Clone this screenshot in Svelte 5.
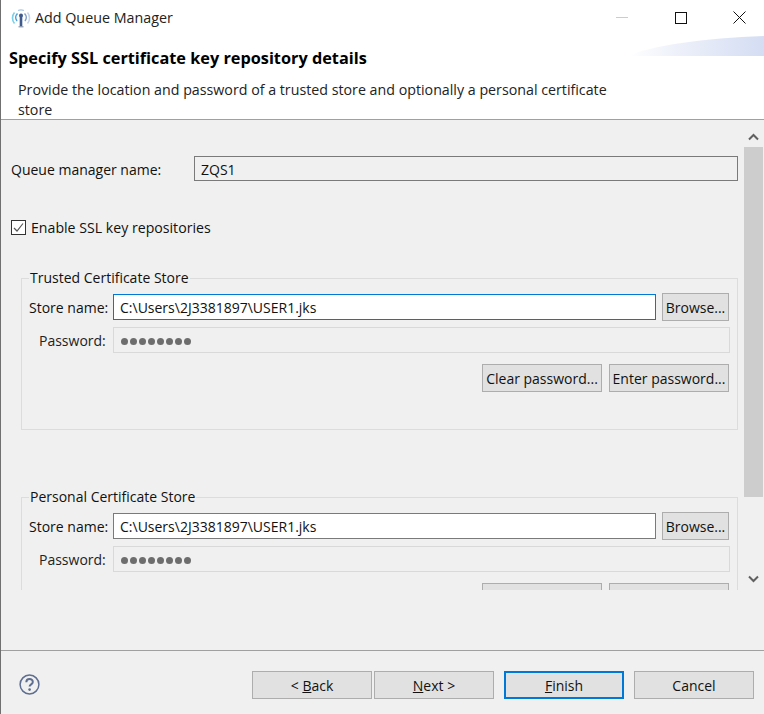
<script>
  const groups = [
    { title: 'Trusted Certificate Store', focused: true },
    { title: 'Personal Certificate Store', focused: false }
  ];
  const storePath = 'C:\\Users\\2J3381897\\USER1.jks';
</script>

<div class="window">
  <div class="titlebar">
    <svg class="app-icon" width="20" height="20" viewBox="0 0 20 20" fill="none">
      <path d="M3.500 15.500a8.500 8.500 0 0 1 0-11" stroke="#79d0e8" stroke-width="1.600" />
      <path d="M6 13a5.500 5.500 0 0 1 .5-7.500" stroke="#4f9fd8" stroke-width="1.600" />
      <path d="M16.500 15.500a8.500 8.500 0 0 0 0-11" stroke="#c5d5ea" stroke-width="1.600" />
      <path d="M14 13a5.500 5.500 0 0 0-.5-7.500" stroke="#7f9fca" stroke-width="1.600" />
      <path d="M7 2.500a8.500 8.500 0 0 1 6 0" stroke="#a8c8e8" stroke-width="1.300" />
      <circle cx="10" cy="7.500" r="2" fill="#3f5a8c" />
      <path d="M10 8v10.500" stroke="#3f5a8c" stroke-width="2.600" />
      <path d="M7.500 18.800h5" stroke="#8a97ad" stroke-width="1.200" />
    </svg>
    <span class="window-title">Add Queue Manager</span>
    <div class="controls">
      <span class="ctl"><i class="min"></i></span>
      <span class="ctl"><i class="max"></i></span>
      <span class="ctl">
        <svg width="13" height="13" viewBox="0 0 13 13"><path d="M.5.5l12 12M12.500.5l-12 12" stroke="#111" fill="none" /></svg>
      </span>
    </div>
  </div>

  <header class="banner">
    <svg class="swoosh" width="136" height="20" viewBox="0 0 136 20">
      <defs>
        <linearGradient id="sw" x1="0" x2="1" y1="0" y2="0">
          <stop offset="0" stop-color="#ffffff" />
          <stop offset="0.35" stop-color="#eef1fa" />
          <stop offset="1" stop-color="#d4ddf3" />
        </linearGradient>
      </defs>
      <path d="M0 20C22 10 76 2 136 0V20Z" fill="url(#sw)" />
    </svg>
    <h1>Specify SSL certificate key repository details</h1>
    <p>Provide the location and password of a trusted store and optionally a personal certificate store</p>
  </header>

  <div class="middle">
    <div class="scroller">
      <div class="qm-row">
        <label for="qm">Queue manager name:</label>
        <input id="qm" class="qm" value="ZQS1" readonly />
      </div>

      <div class="check-row">
        <span class="checkbox">
          <svg width="13" height="13" viewBox="0 0 13 13"><path d="M2 7l3 3 6-7.500" stroke="#555" stroke-width="1.200" fill="none" /></svg>
        </span>
        <span>Enable SSL key repositories</span>
      </div>

      {#each groups as g}
        <fieldset class="group">
          <legend>{g.title}</legend>
          <div class="row">
            <span class="lbl">Store name:</span>
            <input class="path" class:focused={g.focused} value={storePath} readonly />
            <button class="browse">Browse...</button>
          </div>
          <div class="row pw">
            <span class="lbl pw-lbl">Password:</span>
            <div class="pw-field">
              {#each Array(8) as _}<b></b>{/each}
            </div>
          </div>
          <div class="pw-buttons">
            <button class="wide">Clear password...</button>
            <button class="wide">Enter password...</button>
          </div>
        </fieldset>
      {/each}
    </div>

    <div class="scrollbar">
      <svg class="arrow up" width="11" height="8" viewBox="0 0 11 8"><path d="M1 6.500l4.500-4.500 4.500 4.500" stroke="#606060" stroke-width="2" fill="none" /></svg>
      <div class="thumb"></div>
      <div class="track"></div>
      <svg class="arrow down" width="11" height="8" viewBox="0 0 11 8"><path d="M1 1.500l4.500 4.500 4.500-4.500" stroke="#606060" stroke-width="2" fill="none" /></svg>
    </div>
  </div>

  <div class="spacer"></div>

  <footer class="footer">
    <svg class="help" width="21" height="21" viewBox="0 0 21 21" fill="none">
      <circle cx="10.500" cy="10.500" r="9.400" stroke="#5d6e90" stroke-width="1.500" />
      <path d="M7.300 8.200c0-4.300 6.600-4.200 6.500-.2 0 2.400-3.200 2.400-3.200 4.600" stroke="#5d6e90" stroke-width="2" />
      <circle cx="10.600" cy="15.600" r="1.300" fill="#5d6e90" />
    </svg>
    <div class="nav">
      <button class="nav-btn">&lt; <u>B</u>ack</button>
      <button class="nav-btn next"><u>N</u>ext &gt;</button>
      <button class="nav-btn finish"><u>F</u>inish</button>
      <button class="nav-btn">Cancel</button>
    </div>
  </footer>
</div>

<style>
  :global(body) {
    margin: 0;
    overflow: hidden;
    background: #f0f0f0;
  }
  .window {
    width: 764px;
    height: 714px;
    box-sizing: border-box;
    border-left: 1px solid #707070;
    display: flex;
    flex-direction: column;
    font-family: "Open Sans", "Noto Sans", sans-serif;
    font-size: 14px;
    color: #111;
    background: #f0f0f0;
    overflow: hidden;
  }
  .titlebar {
    height: 35px;
    padding-bottom: 1px;
    flex: none;
    display: flex;
    align-items: center;
    background: #fff;
    padding-left: 10px;
  }
  .app-icon {
    margin-right: 4px;
  }
  .window-title {
    font-size: 14.3px;
    color: #222;
  }
  .controls {
    margin-left: auto;
    margin-right: -5px;
    display: flex;
  }
  .ctl {
    width: 59px;
    height: 34px;
    display: flex;
    align-items: center;
    justify-content: center;
  }
  .min {
    width: 12px;
    height: 1px;
    background: #ccc;
    margin-bottom: 1px;
  }
  .max {
    width: 10px;
    height: 10px;
    border: 1px solid #111;
  }
  .banner {
    position: relative;
    height: 84px;
    flex: none;
    box-sizing: border-box;
    background: #fff;
    border-bottom: 1px solid #a0a0a0;
  }
  .swoosh {
    position: absolute;
    right: 0;
    top: 0;
  }
  h1 {
    margin: 0;
    padding: 12px 0 0 8px;
    font-size: 16.300px;
    line-height: 20px;
    font-weight: 700;
    color: #000;
  }
  .banner p {
    margin: 0;
    padding: 12px 0 0 17px;
    width: 610px;
    font-size: 14.240px;
    line-height: 20px;
    color: #222;
  }
  .middle {
    height: 470px;
    flex: none;
    display: flex;
    overflow: hidden;
  }
  .spacer {
    height: 60px;
    flex: none;
  }
  .scroller {
    width: 742px;
    flex: none;
    box-sizing: border-box;
    padding: 36px 0 0 10px;
    overflow: hidden;
  }
  .qm-row {
    display: flex;
    align-items: center;
    height: 25px;
    width: 727px;
  }
  .qm-row label {
    width: 183px;
    flex: none;
    padding-top: 2px;
  }
  input {
    font: inherit;
    box-sizing: border-box;
    color: #111;
    outline: none;
    margin: 0;
  }
  .qm {
    width: 544px;
    height: 25px;
    padding: 1px 6px 0;
    background: #f0f0f0;
    border: 1px solid #7a7a7a;
  }
  .check-row {
    display: flex;
    align-items: center;
    height: 20px;
    margin-top: 36px;
    gap: 5px;
    font-size: 14.150px;
  }
  .checkbox {
    width: 15px;
    height: 15px;
    border: 1px solid #333;
    background: #fff;
    display: flex;
    align-items: center;
    justify-content: center;
    box-sizing: border-box;
    flex: none;
  }
  .group {
    width: 717px;
    height: 161px;
    box-sizing: border-box;
    margin: 32px 0 0 10px;
    padding: 7px 7px 0 7px;
    border: 1px solid #dcdcdc;
    min-width: 0;
  }
  .group + .group {
    margin-top: 58px;
  }
  legend {
    margin-left: 0;
    padding: 0 1px;
    line-height: 18px;
  }
  .row {
    display: flex;
    align-items: center;
    height: 26px;
  }
  .row.pw {
    margin-top: 7px;
  }
  .lbl {
    width: 84px;
    flex: none;
  }
  .pw-lbl {
    text-indent: 10px;
    color: #222;
  }
  .path {
    width: 543px;
    height: 26px;
    padding: 0 6px;
    border: 1px solid #7a7a7a;
    background: #fff;
  }
  .path.focused {
    border-color: #0078d7;
  }
  button {
    font: inherit;
    color: #111;
    background: #e1e1e1;
    border: 1px solid #adadad;
    padding: 0;
    margin: 0;
    box-sizing: border-box;
  }
  .browse {
    width: 67px;
    height: 28px;
    margin-left: 6px;
    flex: none;
  }
  .pw-field {
    width: 617px;
    height: 26px;
    box-sizing: border-box;
    border: 1px solid #d9d9d9;
    background: #f0f0f0;
    display: flex;
    align-items: center;
    gap: 2px;
    padding: 2px 0 0 7px;
    flex: none;
  }
  .pw-field b {
    width: 7px;
    height: 7px;
    border-radius: 50%;
    background: #6d6d6d;
  }
  .pw-buttons {
    display: flex;
    justify-content: flex-end;
    gap: 7px;
    margin-top: 11px;
    padding-right: 1px;
  }
  .wide {
    width: 120px;
    height: 28px;
  }
  .scrollbar {
    width: 21px;
    flex: none;
    display: flex;
    flex-direction: column;
    align-items: center;
    height: 470px;
  }
  .arrow {
    flex: none;
  }
  .arrow.up {
    margin: 13px 0 6px;
  }
  .arrow.down {
    margin-bottom: 7px;
  }
  .thumb {
    width: 19px;
    height: 350px;
    background: #cdcdcd;
    flex: none;
  }
  .track {
    flex: 1;
  }
  .footer {
    flex: 1;
    display: flex;
    align-items: flex-start;
    border-top: 1px solid #a0a0a0;
    box-sizing: border-box;
    padding: 20px 10px 0 18px;
  }
  .help {
    margin-top: 3px;
  }
  .nav {
    margin-left: auto;
    display: flex;
    gap: 10px;
  }
  .nav-btn {
    width: 120px;
    height: 28px;
  }
  .next {
    margin-left: -8px;
  }
  .finish {
    border: 2px solid #0078d7;
  }
</style>
